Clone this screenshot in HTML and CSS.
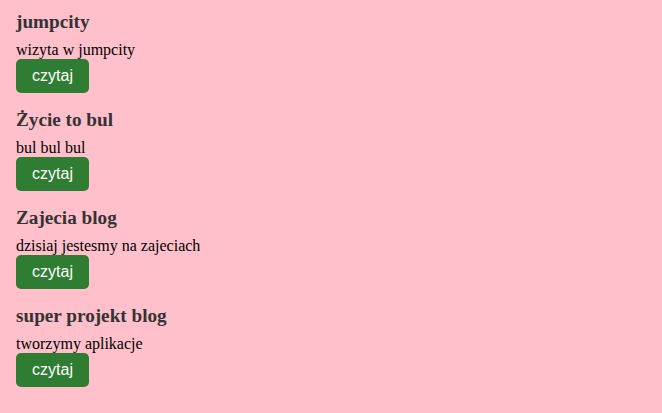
FILE: index.html
```html
<!DOCTYPE html>
<html lang="pl">
<head>
<meta charset="utf-8">
<link rel="stylesheet" href="styles.css">
</head>
<body>
<main class="list">
  <article class="post">
    <h3 class="post-title">jumpcity</h3>
    <p class="post-text">wizyta w jumpcity</p>
    <button class="btn">czytaj</button>
  </article>
  <article class="post">
    <h3 class="post-title">Życie to bul</h3>
    <p class="post-text">bul bul bul</p>
    <button class="btn">czytaj</button>
  </article>
  <article class="post">
    <h3 class="post-title">Zajecia blog</h3>
    <p class="post-text">dzisiaj jestesmy na zajeciach</p>
    <button class="btn">czytaj</button>
  </article>
  <article class="post">
    <h3 class="post-title">super projekt blog</h3>
    <p class="post-text">tworzymy aplikacje</p>
    <button class="btn">czytaj</button>
  </article>
</main>
</body>
</html>
```
FILE: styles.css
```css
html, body {
  margin: 0;
  background: #ffc0cb;
}
body {
  font-family: "Liberation Serif", "Times New Roman", serif;
  color: #000;
}
.list {
  padding: 11px 16px;
}
.post + .post {
  margin-top: 16px;
}
.post-title {
  margin: 0 0 9px;
  font-size: 19.2px;
  font-weight: bold;
  color: #333;
  line-height: 21px;
}
.post-text {
  margin: 0;
  font-size: 16px;
  line-height: 18px;
}
.btn {
  display: block;
  margin: 0;
  border: none;
  border-radius: 5px;
  background: #2e7d32;
  color: #fff;
  font-family: "Liberation Sans", Arial, sans-serif;
  font-size: 16px;
  line-height: 18px;
  padding: 8px 16px;
  width: 73px;
  height: 34px;
}
```
